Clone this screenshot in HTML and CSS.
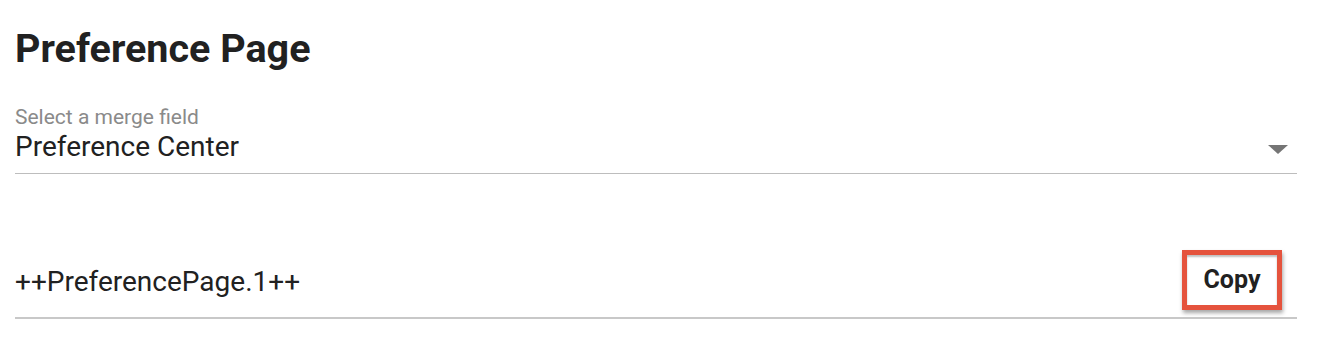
FILE: index.html
```html
<!DOCTYPE html>
<html lang="en">
<head>
  <meta charset="UTF-8">
  <title>Preference Page</title>
  <link rel="stylesheet" href="styles.css">
</head>
<body>

  <div class="painel">
    <h1 class="titulo">Preference Page</h1>

    <!-- Campo de seleção -->
    <div class="campo-select">
      <label class="rotulo">Select a merge field</label>
      <div class="valor-linha">
        <span class="valor">Preference Center</span>
        <span class="seta"></span>
      </div>
    </div>

    <!-- Campo com o merge tag e o botão copiar -->
    <div class="campo-copia">
      <span class="merge-tag">++PreferencePage.1++</span>
      <div class="destaque">
        <button class="btn-copiar">Copy</button>
      </div>
    </div>
  </div>

</body>
</html>
```

FILE: styles.css
```css
body {
  font-family: Roboto, Arial, sans-serif;
  background-color: #ffffff;
  color: #212121;
  margin: 0;
  padding: 0 21px 0 15px;
}

.painel {
  display: flex;
  flex-direction: column;
}

/* Título */
.titulo {
  font-size: 39.5px;
  font-weight: 700;
  margin: 27px 0 0 0;
  line-height: 44px;
}

/* Select */
.campo-select {
  margin-top: 34px;
  border-bottom: 1px solid #bdbdbd;
  padding-bottom: 10px;
}

.rotulo {
  display: block;
  font-size: 21px;
  color: #8a8a8a;
  line-height: 24px;
}

.valor-linha {
  display: flex;
  justify-content: space-between;
  align-items: flex-start;
  margin-top: 2px;
}

.valor {
  font-size: 28px;
  line-height: 32px;
  color: #212121;
}

.seta {
  width: 0;
  height: 0;
  border-left: 10px solid transparent;
  border-right: 10px solid transparent;
  border-top: 9px solid #757575;
  margin-top: 14px;
  margin-right: 9px;
}

/* Linha do merge tag */
.campo-copia {
  margin-top: 76px;
  display: flex;
  justify-content: space-between;
  align-items: center;
  border-bottom: 2px solid #c8c8c8;
  padding-bottom: 7px;
}

.merge-tag {
  font-size: 28px;
  line-height: 32px;
  padding-top: 4px;
  color: #212121;
}

/* Moldura vermelha em volta do botão */
.destaque {
  border: 5px solid #e5533d;
  box-shadow: 1px 3px 4px rgba(0, 0, 0, 0.35);
  margin-right: 15px;
}

.btn-copiar {
  display: block;
  width: 90px;
  height: 50px;
  font-family: Roboto, Arial, sans-serif;
  font-size: 25px;
  font-weight: 700;
  line-height: 30px;
  color: #212121;
  background: #ffffff;
  border: none;
  box-shadow: inset 0 2px 2px rgba(0, 0, 0, 0.25);
  padding: 0;
  cursor: pointer;
}
```
